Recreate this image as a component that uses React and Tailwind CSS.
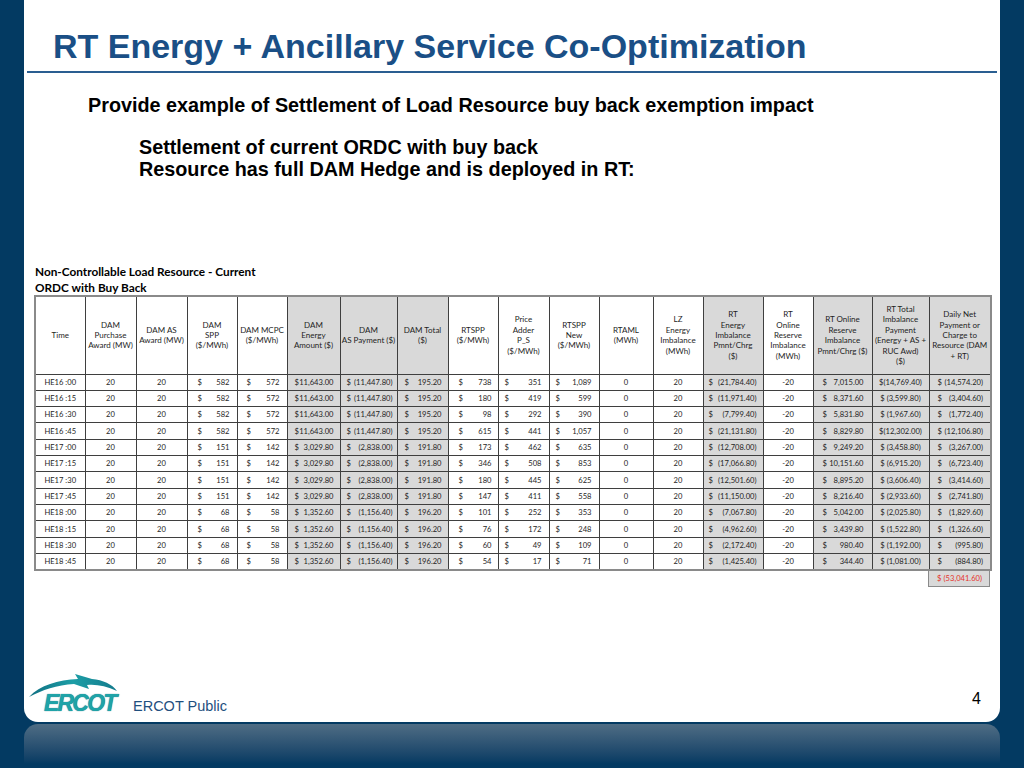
import React from 'react';

const COLS = [
  { w: 50, t: 'c' },
  { w: 51, t: 'c' },
  { w: 51, t: 'c' },
  { w: 50, t: 'a', p: 'pl-[10px] pr-[7px]' },
  { w: 50, t: 'a', p: 'pl-[9px] pr-[7px]' },
  { w: 53, t: 'a', p: 'pl-[7px] pr-[6px]', s: true },
  { w: 57, t: 'a', p: 'pl-[6px] pr-[4px]', s: true },
  { w: 51, t: 'a', p: 'pl-[7px] pr-[6px]', s: true },
  { w: 50, t: 'a', p: 'pl-[10px] pr-[6px]' },
  { w: 51, t: 'a', p: 'pl-[6px] pr-[7px]' },
  { w: 50, t: 'a', p: 'pl-[6px] pr-[7px]' },
  { w: 54, t: 'c' },
  { w: 50, t: 'c' },
  { w: 60, t: 'a', p: 'pl-[5px] pr-[6px]', s: true },
  { w: 50, t: 'c' },
  { w: 59, t: 'a', p: 'pl-[9px] pr-[8px]', s: true },
  { w: 57, t: 'c', s: true },
  { w: 62, t: 'a', p: 'pl-[8px] pr-[7px]', s: true },
];

const HEAD = [
  ['Time'],
  ['DAM', 'Purchase', 'Award (MW)'],
  ['DAM AS', 'Award (MW)'],
  ['DAM', 'SPP', '($/MWh)'],
  ['DAM MCPC', '($/MWh)'],
  ['DAM', 'Energy', 'Amount ($)'],
  ['DAM', 'AS Payment ($)'],
  ['DAM Total', '($)'],
  ['RTSPP', '($/MWh)'],
  ['Price', 'Adder', 'P_S', '($/MWh)'],
  ['RTSPP', 'New', '($/MWh)'],
  ['RTAML', '(MWh)'],
  ['LZ', 'Energy', 'Imbalance', '(MWh)'],
  ['RT', 'Energy', 'Imbalance', 'Pmnt/Chrg', '($)'],
  ['RT', 'Online', 'Reserve', 'Imbalance', '(MWh)'],
  ['RT Online', 'Reserve', 'Imbalance', 'Pmnt/Chrg ($)'],
  ['RT Total', 'Imbalance', 'Payment', '(Energy + AS +', 'RUC Awd)', '($)'],
  ['Daily Net', 'Payment or', 'Charge to', 'Resource (DAM', '+ RT)'],
];

const H16 = ['20', '20', '582', '572', '11,643.00', '(11,447.80)', '195.20'];
const H17 = ['20', '20', '151', '142', '3,029.80', '(2,838.00)', '191.80'];
const H18 = ['20', '20', '68', '58', '1,352.60', '(1,156.40)', '196.20'];

const ROWS = [
  ['HE16 :00', ...H16, '738', '351', '1,089', '0', '20', '(21,784.40)', '-20', '7,015.00', '$(14,769.40)', '(14,574.20)'],
  ['HE16 :15', ...H16, '180', '419', '599', '0', '20', '(11,971.40)', '-20', '8,371.60', '$ (3,599.80)', '(3,404.60)'],
  ['HE16 :30', ...H16, '98', '292', '390', '0', '20', '(7,799.40)', '-20', '5,831.80', '$ (1,967.60)', '(1,772.40)'],
  ['HE16 :45', ...H16, '615', '441', '1,057', '0', '20', '(21,131.80)', '-20', '8,829.80', '$(12,302.00)', '(12,106.80)'],
  ['HE17 :00', ...H17, '173', '462', '635', '0', '20', '(12,708.00)', '-20', '9,249.20', '$ (3,458.80)', '(3,267.00)'],
  ['HE17 :15', ...H17, '346', '508', '853', '0', '20', '(17,066.80)', '-20', '10,151.60', '$ (6,915.20)', '(6,723.40)'],
  ['HE17 :30', ...H17, '180', '445', '625', '0', '20', '(12,501.60)', '-20', '8,895.20', '$ (3,606.40)', '(3,414.60)'],
  ['HE17 :45', ...H17, '147', '411', '558', '0', '20', '(11,150.00)', '-20', '8,216.40', '$ (2,933.60)', '(2,741.80)'],
  ['HE18 :00', ...H18, '101', '252', '353', '0', '20', '(7,067.80)', '-20', '5,042.00', '$ (2,025.80)', '(1,829.60)'],
  ['HE18 :15', ...H18, '76', '172', '248', '0', '20', '(4,962.60)', '-20', '3,439.80', '$ (1,522.80)', '(1,326.60)'],
  ['HE18 :30', ...H18, '60', '49', '109', '0', '20', '(2,172.40)', '-20', '980.40', '$ (1,192.00)', '(995.80)'],
  ['HE18 :45', ...H18, '54', '17', '71', '0', '20', '(1,425.40)', '-20', '344.40', '$ (1,081.00)', '(884.80)'],
];

function Cell({ col, value }) {
  const bg = col.s ? 'bg-[#d9d9d9]' : 'bg-white';
  if (col.t === 'a') {
    return (
      <td className={`border border-[#3f3f3f] ${bg} p-0`}>
        <div className={`flex justify-between ${col.p}`}>
          <span>$</span>
          <span>{value}</span>
        </div>
      </td>
    );
  }
  return (
    <td className={`border border-[#3f3f3f] ${bg} p-0 text-center whitespace-pre`}>{value}</td>
  );
}

function ErcotLogo() {
  return (
    <div className="flex flex-col w-[92px] h-[40px]">
      <svg width="90" height="24" viewBox="0 0 90 24">
        <defs>
          <linearGradient id="sw" x1="0" y1="0" x2="1" y2="0">
            <stop offset="0" stopColor="#0f6f82" />
            <stop offset="0.5" stopColor="#1d9ea6" />
            <stop offset="1" stopColor="#137a8c" />
          </linearGradient>
        </defs>
        <path
          d="M1,23 C12,11 30,6 50,5 L47,0 L64,5 C75,6 84,10 89,17 C78,12 68,10 59,11 L61,15 L46,10 C29,11 14,16 1,23 Z"
          fill="url(#sw)"
        />
      </svg>
      <span className="-mt-[5px] ml-[16px] font-['Liberation_Sans',Arial,sans-serif] font-bold italic text-[23px] leading-[20px] tracking-[-1.8px] text-[#1fa3a8] [text-shadow:0_0_1px_#0d6475]">
        ERCOT
      </span>
    </div>
  );
}

export default function App() {
  return (
    <div className="w-[1024px] h-[768px] bg-[#033a62] flex flex-col overflow-hidden">
      <div className="ml-[24px] w-[976px] h-[722px] bg-white rounded-b-[14px] flex flex-col font-['Liberation_Sans',Arial,sans-serif]">
        <h1 className="mt-[29px] ml-[29px] text-[34px] leading-[34px] font-bold text-[#1a4f86]">
          RT Energy + Ancillary Service Co-Optimization
        </h1>
        <div className="mt-[8px] mx-[3px] h-[2px] bg-[#2a5e91]" />

        <p className="mt-[21px] ml-[64px] text-[19.8px] leading-[22px] font-bold text-black">
          Provide example of Settlement of Load Resource buy back exemption impact
        </p>
        <div className="mt-[20px] ml-[115px] text-[19.8px] leading-[22px] font-bold text-black">
          <p>Settlement of current ORDC with buy back</p>
          <p>Resource has full DAM Hedge and is deployed in RT:</p>
        </div>

        <div className="mt-[84px] ml-[10px] font-['Lato',sans-serif] text-[#1e1e1e]">
          <div className="ml-[1px] text-[11.8px] leading-[16px] font-bold text-black">
            <p>Non-Controllable Load Resource - Current</p>
            <p>ORDC with Buy Back</p>
          </div>
          <table className="table-fixed border-collapse w-[956px] border-2 border-[#8a8a8a] mt-[-1px]">
            <colgroup>
              {COLS.map((c, i) => (
                <col key={i} style={{ width: c.w }} />
              ))}
            </colgroup>
            <thead>
              <tr className="h-[78px]">
                {HEAD.map((lines, i) => (
                  <th
                    key={i}
                    className={`border border-[#3f3f3f] p-0 font-normal text-[8px] leading-[10.4px] text-center align-middle ${COLS[i].s ? 'bg-[#d9d9d9]' : 'bg-white'}`}
                  >
                    {lines.map((l, j) => (
                      <div key={j} className="whitespace-nowrap">{l}</div>
                    ))}
                  </th>
                ))}
              </tr>
            </thead>
            <tbody className="text-[7.6px] leading-[9px]">
              {ROWS.map((r, i) => (
                <tr key={i} className="h-[16.33px]">
                  {r.map((v, j) => (
                    <Cell key={j} col={COLS[j]} value={v} />
                  ))}
                </tr>
              ))}
            </tbody>
          </table>
          <div className="flex justify-end w-[956px]">
            <div className="w-[62px] h-[16px] bg-[#d9d9d9] border border-[#8a8a8a] border-t-0 text-[7.6px] leading-[15px] text-[#e5332a] flex justify-between pl-[8px] pr-[7px]">
              <span>$</span>
              <span>(53,041.60)</span>
            </div>
          </div>
        </div>

        <div className="mt-auto mb-[8px] flex items-end">
          <div className="ml-[4px]">
            <ErcotLogo />
          </div>
          <span className="ml-[13px] text-[14.5px] leading-[16px] text-[#1f4f7e]">ERCOT Public</span>
          <span className="ml-auto mr-[19px] mb-[6px] text-[16px] leading-[18px] text-black">4</span>
        </div>
      </div>
      <div className="ml-[24px] mt-[2px] w-[976px] h-[40px] rounded-t-[14px] bg-gradient-to-b from-[#4f6d84] to-[#033a62]" />
    </div>
  );
}
